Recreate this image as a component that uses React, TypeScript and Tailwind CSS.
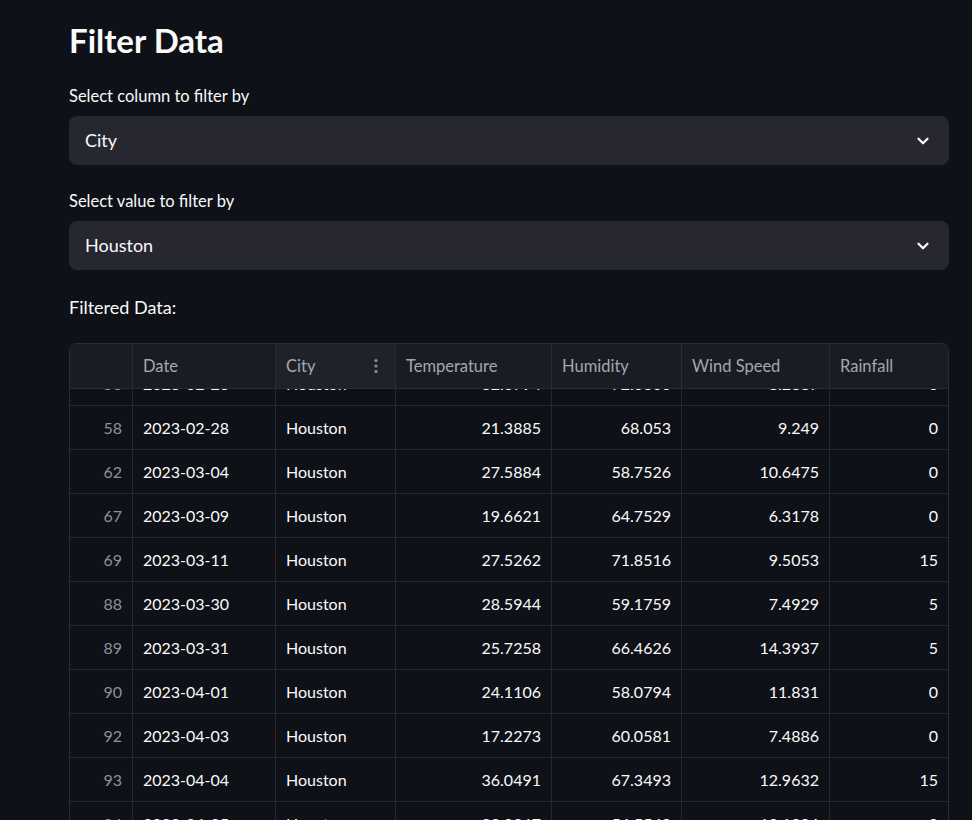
import React from "react";

type Row = { idx: string; date: string; city: string; t: string; h: string; w: string; r: string };

const rows: Row[] = [
  { idx: "58", date: "2023-02-28", city: "Houston", t: "21.3885", h: "68.053", w: "9.249", r: "0" },
  { idx: "62", date: "2023-03-04", city: "Houston", t: "27.5884", h: "58.7526", w: "10.6475", r: "0" },
  { idx: "67", date: "2023-03-09", city: "Houston", t: "19.6621", h: "64.7529", w: "6.3178", r: "0" },
  { idx: "69", date: "2023-03-11", city: "Houston", t: "27.5262", h: "71.8516", w: "9.5053", r: "15" },
  { idx: "88", date: "2023-03-30", city: "Houston", t: "28.5944", h: "59.1759", w: "7.4929", r: "5" },
  { idx: "89", date: "2023-03-31", city: "Houston", t: "25.7258", h: "66.4626", w: "14.3937", r: "5" },
  { idx: "90", date: "2023-04-01", city: "Houston", t: "24.1106", h: "58.0794", w: "11.831", r: "0" },
  { idx: "92", date: "2023-04-03", city: "Houston", t: "17.2273", h: "60.0581", w: "7.4886", r: "0" },
  { idx: "93", date: "2023-04-04", city: "Houston", t: "36.0491", h: "67.3493", w: "12.9632", r: "15" },
  { idx: "94", date: "2023-04-05", city: "Houston", t: "33.0367", h: "56.5548", w: "10.1096", r: "0" },
];

const topRow: Row = { idx: "56", date: "2023-02-26", city: "Houston", t: "32.0794", h: "72.0300", w: "8.2887", r: "0" };

const cols = "grid grid-cols-[63px_143px_120px_156px_130px_148px_118px]";

function Chevron() {
  return (
    <svg width="18" height="18" viewBox="0 0 24 24" fill="none" stroke="#fafafa" strokeWidth="3" strokeLinecap="round" strokeLinejoin="round">
      <polyline points="6 9 12 15 18 9" />
    </svg>
  );
}

function Select({ label, value }: { label: string; value: string }) {
  return (
    <div className="flex flex-col">
      <div className="text-[16.5px] leading-[20px] text-[#fafafa] mb-[10px]">{label}</div>
      <div className="h-[49px] rounded-[8px] bg-[#262730] flex items-center justify-between pl-[16px] pr-[17px]">
        <span className="text-[18px] text-[#fafafa]">{value}</span>
        <Chevron />
      </div>
    </div>
  );
}

function DataRow({ r }: { r: Row }) {
  const cell = "h-[43px] flex items-center px-[10px] border-r border-[#262730]";
  return (
    <div className={`${cols} border-b border-[#262730] text-[16px] text-[#fafafa]`}>
      <div className={`${cell} justify-end text-[#8e9099]`}>{r.idx}</div>
      <div className={cell}>{r.date}</div>
      <div className={cell}>{r.city}</div>
      <div className={`${cell} justify-end`}>{r.t}</div>
      <div className={`${cell} justify-end`}>{r.h}</div>
      <div className={`${cell} justify-end`}>{r.w}</div>
      <div className={`${cell} justify-end border-r-0`}>{r.r}</div>
    </div>
  );
}

export default function App() {
  const head = "h-[44px] flex items-center px-[10px] border-r border-[#2a2c35] text-[16.5px] text-[#a5a7b0]";
  return (
    <div className="min-h-[820px] h-[820px] overflow-hidden bg-[#0e1117] font-['Lato','Noto_Sans',sans-serif]">
      <div className="pl-[69px] pr-[23px] pt-[20px]">
        <h1 className="text-[33px] leading-[40px] font-bold text-[#fafafa] mb-[26px]">Filter Data</h1>
        <Select label="Select column to filter by" value="City" />
        <div className="h-[26px]" />
        <Select label="Select value to filter by" value="Houston" />
        <div className="mt-[26px] text-[18px] leading-[22px] text-[#fafafa]">Filtered Data:</div>
        <div className="mt-[25px] rounded-t-[8px] border border-[#2a2c35] border-b-0 overflow-hidden">
          <div className={`${cols} bg-[#1a1c23] border-b border-[#2a2c35]`}>
            <div className={head}></div>
            <div className={head}>Date</div>
            <div className={`${head} bg-[#20222a] justify-between pr-[17px]`}>
              <span>City</span>
              <svg width="4" height="16" viewBox="0 0 4 16" fill="#8e9099">
                <circle cx="2" cy="2.5" r="1.6" />
                <circle cx="2" cy="8" r="1.6" />
                <circle cx="2" cy="13.5" r="1.6" />
              </svg>
            </div>
            <div className={head}>Temperature</div>
            <div className={head}>Humidity</div>
            <div className={head}>Wind Speed</div>
            <div className={`${head} border-r-0`}>Rainfall</div>
          </div>
          <div className="h-[17px] overflow-hidden flex flex-col justify-end">
            <DataRow r={topRow} />
          </div>
          {rows.map((r) => (
            <DataRow key={r.idx} r={r} />
          ))}
        </div>
      </div>
    </div>
  );
}
